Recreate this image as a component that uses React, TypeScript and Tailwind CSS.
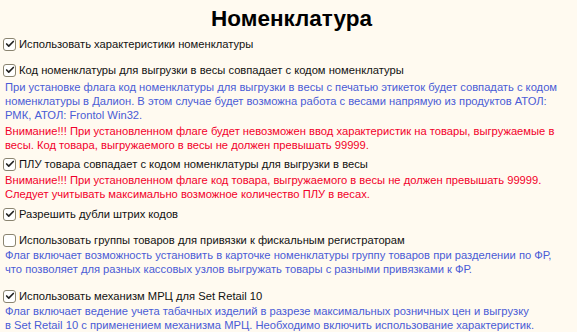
import { Check } from 'lucide-react';

function Flag({ label, checked = true, className = '' }: { label: string; checked?: boolean; className?: string }) {
  return (
    <div className={`flex items-center h-4 ${className}`}>
      <span className="w-[13px] h-[13px] ml-[3px] mr-[3px] rounded-[3px] border border-[#8a8470] bg-white flex items-center justify-center">
        {checked && <Check className="w-[10px] h-[10px] text-[#222]" strokeWidth={4} />}
      </span>
      <span className="text-[#111]">{label}</span>
    </div>
  );
}

function Note({ lines, color, className = '' }: { lines: string[]; color: 'blue' | 'red'; className?: string }) {
  return (
    <div className={`pl-[5px] leading-[14px] ${color === 'blue' ? 'text-[#4a5cd6]' : 'text-[#f2002a]'} ${className}`}>
      {lines.map((l) => (
        <div key={l} className="whitespace-nowrap">{l}</div>
      ))}
    </div>
  );
}

export default function App() {
  return (
    <div className="w-[577px] h-[332px] bg-[#fffaf0] text-[11.2px] overflow-hidden" style={{ fontFamily: '"Liberation Sans", Arial, sans-serif' }}>
      <h1 className="h-[28px] mt-[5px] pl-[6px] text-center text-[22.5px] font-bold leading-[28px] text-black">Номенклатура</h1>

      <Flag label="Использовать характеристики номенклатуры" className="mt-[3px]" />

      <Flag label="Код номенклатуры для выгрузки в весы совпадает с кодом номенклатуры" className="mt-[10px]" />
      <Note
        color="blue"
        className="mt-[2px]"
        lines={[
          'При установке флага код номенклатуры для выгрузки в весы с печатью этикеток будет совпадать с кодом',
          'номенклатуры в Далион. В этом случае будет возможна работа с весами напрямую из продуктов АТОЛ:',
          'РМК, АТОЛ: Frontol Win32.',
        ]}
      />
      <Note
        color="red"
        className="mt-[2px]"
        lines={[
          'Внимание!!! При установленном флаге будет невозможен ввод характеристик на товары, выгружаемые в',
          'весы. Код товара, выгружаемого в весы не должен превышать 99999.',
        ]}
      />

      <Flag label="ПЛУ товара совпадает с кодом номенклатуры для выгрузки в весы" className="mt-[4px]" />
      <Note
        color="red"
        className="mt-[1px]"
        lines={[
          'Внимание!!! При установленном флаге код товара, выгружаемого в весы не должен превышать 99999.',
          'Следует учитывать максимально возможное количество ПЛУ в весах.',
        ]}
      />

      <Flag label="Разрешить дубли штрих кодов" className="mt-[5px]" />

      <Flag label="Использовать группы товаров для привязки к фискальным регистраторам" checked={false} className="mt-[10px]" />
      <Note
        color="blue"
        lines={[
          'Флаг включает возможность установить в карточке номенклатуры группу товаров при разделении по ФР,',
          'что позволяет для разных кассовых узлов выгружать товары с разными привязками к ФР.',
        ]}
      />

      <Flag label="Использовать механизм МРЦ для Set Retail 10" className="mt-[12px]" />
      <Note
        color="blue"
        lines={[
          'Флаг включает ведение учета табачных изделий в разрезе максимальных розничных цен и выгрузку',
          'в Set Retail 10 с применением механизма МРЦ. Необходимо включить использование характеристик.',
        ]}
      />
    </div>
  );
}
